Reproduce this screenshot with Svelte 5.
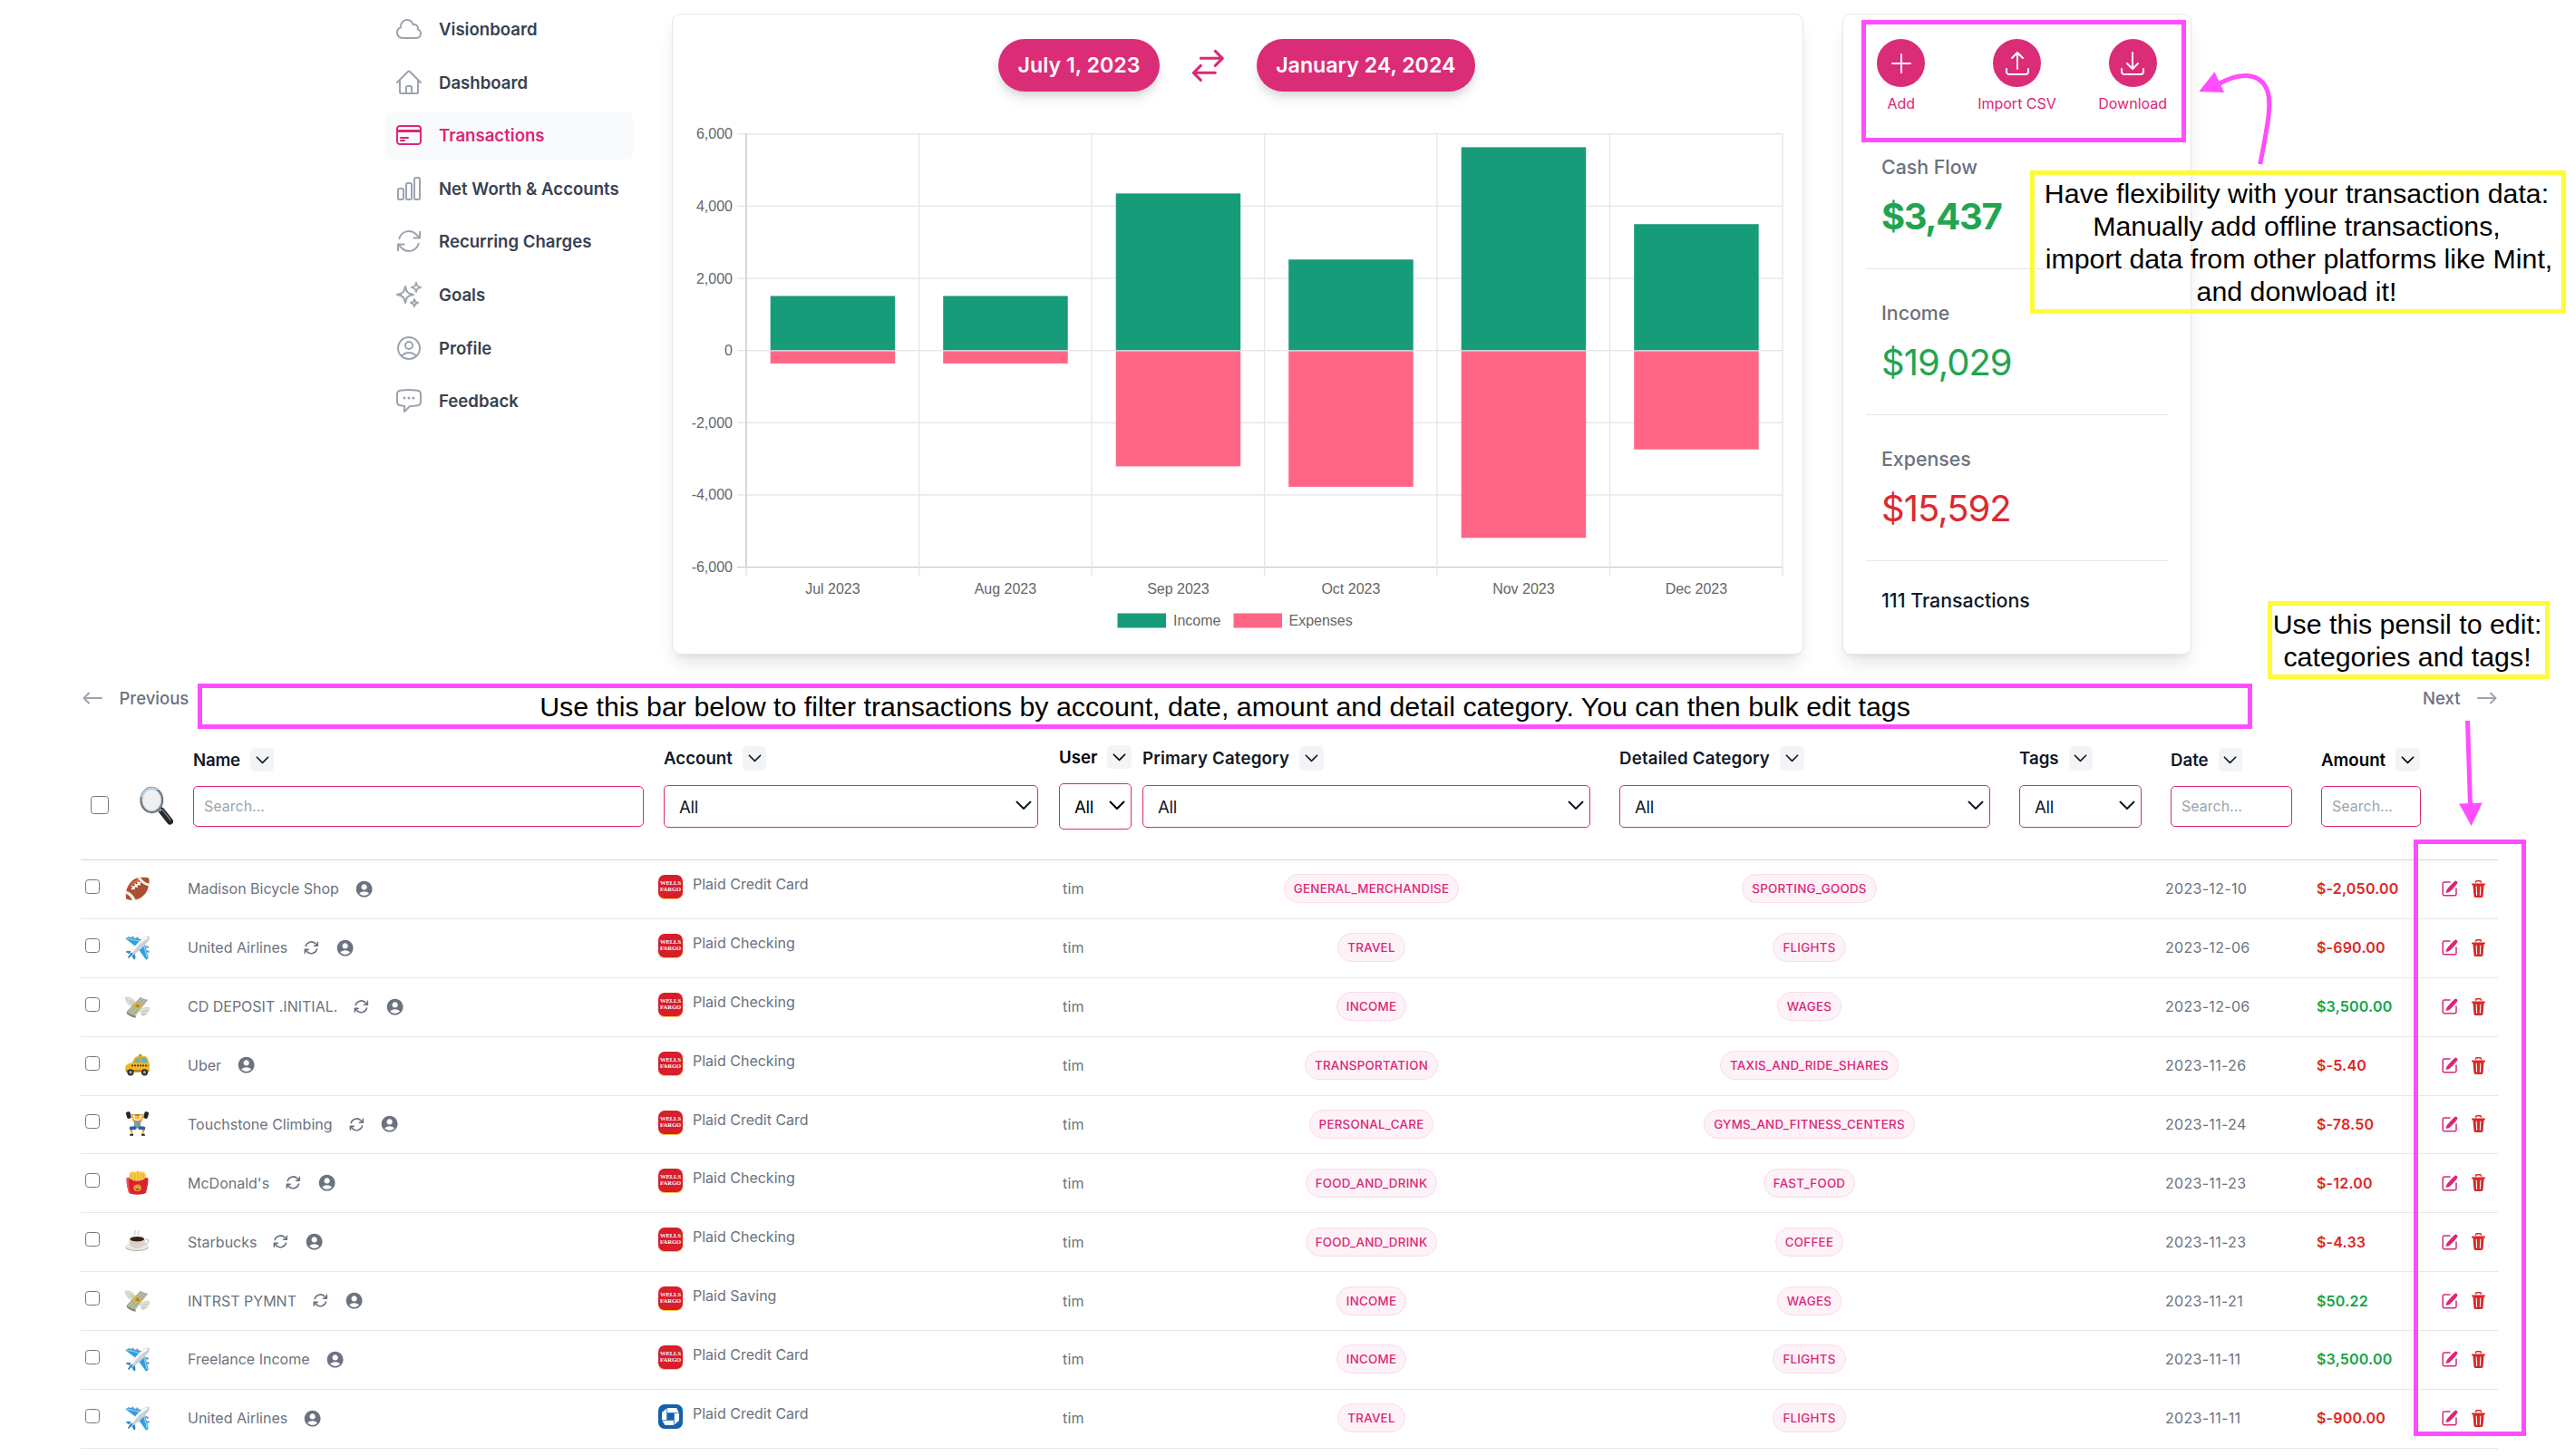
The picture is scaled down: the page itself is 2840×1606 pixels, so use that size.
<script lang="ts">
  type Icon = string[];

  const icons: Record<string, Icon> = {
    cloud: ['M2.25 15a4.5 4.5 0 0 0 4.5 4.5H18a3.75 3.75 0 0 0 1.332-7.257 3 3 0 0 0-3.758-3.848 5.25 5.25 0 0 0-10.233 2.33A4.502 4.502 0 0 0 2.25 15Z'],
    home: ['m2.25 12 8.954-8.955c.44-.439 1.152-.439 1.591 0L21.75 12M4.5 9.75v10.125c0 .621.504 1.125 1.125 1.125H9.75v-4.875c0-.621.504-1.125 1.125-1.125h2.25c.621 0 1.125.504 1.125 1.125V21h4.125c.621 0 1.125-.504 1.125-1.125V9.75M8.25 21h8.25'],
    card: ['M2.25 8.25h19.5M2.25 9h19.5m-16.5 5.25h6m-6 2.25h3m-3.75 3h15a2.25 2.25 0 0 0 2.25-2.25V6.75A2.25 2.25 0 0 0 19.5 4.5h-15a2.25 2.25 0 0 0-2.25 2.25v10.5A2.25 2.25 0 0 0 4.5 19.5Z'],
    bars: ['M3 13.125C3 12.504 3.504 12 4.125 12h2.25c.621 0 1.125.504 1.125 1.125v6.75C7.5 20.496 6.996 21 6.375 21h-2.25A1.125 1.125 0 0 1 3 19.875v-6.75ZM9.75 8.625c0-.621.504-1.125 1.125-1.125h2.25c.621 0 1.125.504 1.125 1.125v11.25c0 .621-.504 1.125-1.125 1.125h-2.25a1.125 1.125 0 0 1-1.125-1.125V8.625ZM16.5 4.125c0-.621.504-1.125 1.125-1.125h2.25C20.496 3 21 3.504 21 4.125v15.75c0 .621-.504 1.125-1.125 1.125h-2.25a1.125 1.125 0 0 1-1.125-1.125V4.125Z'],
    refresh: ['M16.023 9.348h4.992v-.001M2.985 19.644v-4.992m0 0h4.992m-4.993 0 3.181 3.183a8.25 8.25 0 0 0 13.803-3.7M4.031 9.865a8.25 8.25 0 0 1 13.803-3.7l3.181 3.182m0-4.991v4.99'],
    sparkles: ['M9.813 15.904 9 18.75l-.813-2.846a4.5 4.5 0 0 0-3.09-3.09L2.25 12l2.846-.813a4.5 4.5 0 0 0 3.09-3.09L9 5.25l.813 2.846a4.5 4.5 0 0 0 3.09 3.09L15.75 12l-2.846.813a4.5 4.5 0 0 0-3.09 3.09ZM18.259 8.715 18 9.75l-.259-1.035a3.375 3.375 0 0 0-2.455-2.456L14.25 6l1.036-.259a3.375 3.375 0 0 0 2.455-2.456L18 2.25l.259 1.035a3.375 3.375 0 0 0 2.456 2.456L21.75 6l-1.035.259a3.375 3.375 0 0 0-2.456 2.456ZM16.894 20.567 16.5 21.75l-.394-1.183a2.25 2.25 0 0 0-1.423-1.423L13.5 18.75l1.183-.394a2.25 2.25 0 0 0 1.423-1.423l.394-1.183.394 1.183a2.25 2.25 0 0 0 1.423 1.423l1.183.394-1.183.394a2.25 2.25 0 0 0-1.423 1.423Z'],
    user: ['M17.982 18.725A7.488 7.488 0 0 0 12 15.75a7.488 7.488 0 0 0-5.982 2.975m11.963 0a9 9 0 1 0-11.963 0m11.963 0A8.966 8.966 0 0 1 12 21a8.966 8.966 0 0 1-5.982-2.275M15 9.75a3 3 0 1 1-6 0 3 3 0 0 1 6 0Z'],
    chat: ['M8.625 9.75a.375.375 0 1 1-.75 0 .375.375 0 0 1 .75 0Zm0 0H8.25m4.125 0a.375.375 0 1 1-.75 0 .375.375 0 0 1 .75 0Zm0 0H12m4.125 0a.375.375 0 1 1-.75 0 .375.375 0 0 1 .75 0Zm0 0h-.375m-13.5 3.01c0 1.6 1.123 2.994 2.707 3.227 1.087.16 2.185.283 3.293.369V21l4.184-4.183a1.14 1.14 0 0 1 .778-.332 48.294 48.294 0 0 0 5.83-.498c1.585-.233 2.708-1.626 2.708-3.228V6.741c0-1.602-1.123-2.995-2.707-3.228A48.394 48.394 0 0 0 12 3c-2.392 0-4.744.175-7.043.513C3.373 3.746 2.25 5.14 2.25 6.741v6.018Z'],
    swap: ['M7.5 21 3 16.5m0 0L7.5 12M3 16.5h13.5m0-13.5L21 7.5m0 0L16.5 12M21 7.5H7.5'],
    plus: ['M12 4.5v15m7.5-7.5h-15'],
    upload: ['M3 16.5v2.25A2.25 2.25 0 0 0 5.25 21h13.5A2.25 2.25 0 0 0 21 18.75V16.5m-13.5-9L12 3m0 0 4.5 4.5M12 3v13.5'],
    download: ['M3 16.5v2.25A2.25 2.25 0 0 0 5.25 21h13.5A2.25 2.25 0 0 0 21 18.75V16.5M16.5 12 12 16.5m0 0L7.5 12m4.5 4.5V3']
  };

  const nav = [
    { label: 'Visionboard', icon: 'cloud' },
    { label: 'Dashboard', icon: 'home' },
    { label: 'Transactions', icon: 'card', active: true },
    { label: 'Net Worth & Accounts', icon: 'bars' },
    { label: 'Recurring Charges', icon: 'refresh' },
    { label: 'Goals', icon: 'sparkles' },
    { label: 'Profile', icon: 'user' },
    { label: 'Feedback', icon: 'chat' }
  ];

  const actions = [
    { label: 'Add', icon: 'plus' },
    { label: 'Import CSV', icon: 'upload' },
    { label: 'Download', icon: 'download' }
  ];

  const stats = [
    { label: 'Cash Flow', value: '$3,437', tone: 'green strong' },
    { label: 'Income', value: '$19,029', tone: 'green' },
    { label: 'Expenses', value: '$15,592', tone: 'red' }
  ];

  // Chart geometry, in the chart's own pixels.
  const axisX = 81;
  const step = 190.5;
  const zeroY = 254.6;
  const perUnit = 0.03982;
  const ticks = [6000, 4000, 2000, 0, -2000, -4000, -6000];
  const months = [
    { label: 'Jul 2023', income: 1510, expenses: 350 },
    { label: 'Aug 2023', income: 1510, expenses: 350 },
    { label: 'Sep 2023', income: 4350, expenses: 3200 },
    { label: 'Oct 2023', income: 2520, expenses: 3765 },
    { label: 'Nov 2023', income: 5630, expenses: 5180 },
    { label: 'Dec 2023', income: 3500, expenses: 2730 }
  ];
  const y = (v: number) => zeroY - v * perUnit;

  const columns = [
    { key: 'name', label: 'Name', kind: 'search' },
    { key: 'account', label: 'Account', kind: 'select' },
    { key: 'who', label: 'User', kind: 'select' },
    { key: 'primary', label: 'Primary Category', kind: 'select' },
    { key: 'detail', label: 'Detailed Category', kind: 'select' },
    { key: 'tags', label: 'Tags', kind: 'select' },
    { key: 'date', label: 'Date', kind: 'search' },
    { key: 'amount', label: 'Amount', kind: 'search' }
  ];

  const rows = [
    { art: 'football', name: 'Madison Bicycle Shop', rec: false, bank: 'wf', account: 'Plaid Credit Card', primary: 'GENERAL_MERCHANDISE', detail: 'SPORTING_GOODS', date: '2023-12-10', amount: '$-2,050.00' },
    { art: 'plane', name: 'United Airlines', rec: true, bank: 'wf', account: 'Plaid Checking', primary: 'TRAVEL', detail: 'FLIGHTS', date: '2023-12-06', amount: '$-690.00' },
    { art: 'money', name: 'CD DEPOSIT .INITIAL.', rec: true, bank: 'wf', account: 'Plaid Checking', primary: 'INCOME', detail: 'WAGES', date: '2023-12-06', amount: '$3,500.00' },
    { art: 'taxi', name: 'Uber', rec: false, bank: 'wf', account: 'Plaid Checking', primary: 'TRANSPORTATION', detail: 'TAXIS_AND_RIDE_SHARES', date: '2023-11-26', amount: '$-5.40' },
    { art: 'lifter', name: 'Touchstone Climbing', rec: true, bank: 'wf', account: 'Plaid Credit Card', primary: 'PERSONAL_CARE', detail: 'GYMS_AND_FITNESS_CENTERS', date: '2023-11-24', amount: '$-78.50' },
    { art: 'fries', name: "McDonald's", rec: true, bank: 'wf', account: 'Plaid Checking', primary: 'FOOD_AND_DRINK', detail: 'FAST_FOOD', date: '2023-11-23', amount: '$-12.00' },
    { art: 'coffee', name: 'Starbucks', rec: true, bank: 'wf', account: 'Plaid Checking', primary: 'FOOD_AND_DRINK', detail: 'COFFEE', date: '2023-11-23', amount: '$-4.33' },
    { art: 'money', name: 'INTRST PYMNT', rec: true, bank: 'wf', account: 'Plaid Saving', primary: 'INCOME', detail: 'WAGES', date: '2023-11-21', amount: '$50.22' },
    { art: 'plane', name: 'Freelance Income', rec: false, bank: 'wf', account: 'Plaid Credit Card', primary: 'INCOME', detail: 'FLIGHTS', date: '2023-11-11', amount: '$3,500.00' },
    { art: 'plane', name: 'United Airlines', rec: false, bank: 'chase', account: 'Plaid Credit Card', primary: 'TRAVEL', detail: 'FLIGHTS', date: '2023-11-11', amount: '$-900.00' }
  ];
</script>

{#snippet line(name: string, cls: string, width = 1.5)}
  <svg class={cls} viewBox="0 0 24 24" fill="none" stroke="currentColor" stroke-width={width} stroke-linecap="round" stroke-linejoin="round">
    {#each icons[name] as d}<path {d} />{/each}
  </svg>
{/snippet}

{#snippet chevron(cls: string)}
  <svg class={cls} viewBox="0 0 18 11" fill="none" stroke="currentColor" stroke-width="2" stroke-linecap="round" stroke-linejoin="round"><path d="M1.5 1.5 9 9l7.5-7.5" /></svg>
{/snippet}

{#snippet art(name: string)}
  <svg class="art" viewBox="0 0 27 27">
    {#if name === 'football'}
      <path d="M1.2 24.6C-1 13.500 6 1.200 17.500.8c5-.2 8 .3 8.700 1.200.8 2 .6 10-3.500 16C18 25 8 28 1.200 24.600Z" fill="#a9502f" />
      <path d="M3 13C7 5 14 2 20 2c-5 2-12 6-17 11Z" fill="#c9704a" />
      <path d="M.9 15.500C6 17 10 21 11.800 26.100l-4 .2C6.500 22.500 4 20 .6 18.800ZM17 .8c2 3.500 5.500 6 9.700 7l-.4 2.800C21 9.500 16.500 6 13.800 1.500Z" fill="#f5efe6" />
      <path d="m7.500 13.500 9-7M8 10.500l2.200 3M11 8.200l2.200 3M14 6l2.200 3" stroke="#fff" stroke-width="1.600" stroke-linecap="round" />
    {:else if name === 'plane'}
      <path d="M.3 3.200 3.500 1.200 20 4.500l-7 8.500ZM25.800 24.800l-2.600 2-9.700-13.300 7.500-7.500Z" fill="#2f9fe0" />
      <path d="M1.500 2.800 17 6.500M24.300 24.500 20.500 9.500" stroke="#8fd6f7" stroke-width="1.200" fill="none" />
      <path d="m.5 18 2-1.300 8 .8-3 4ZM10 26.700l1.500-1.700-1-7-4 3Z" fill="#2689cc" />
      <path d="M4.800 20.200C8.500 13.500 16 4.500 22.300 1.300c2.200-1 4.700-1 4.700.5 0 2-.8 3.500-2.200 5.300C19.800 13 12.500 19.700 7 22.700c-1.800.9-3-.8-2.200-2.500Z" fill="#ccd1d7" />
      <path d="M7 18.500C12 11.500 17 6 23.500 2.500" stroke="#fff" stroke-width="2.200" fill="none" stroke-linecap="round" />
      <path d="m3.500 24.500 4.500-5.500" stroke="#1c75b8" stroke-width="1.500" />
      <path d="m8 .8 1.500 2.800M13 1.700l1.300 2.800M25.700 13l-3-1.200M26.500 18l-3-1" stroke="#7894a8" stroke-width="1.900" />
    {:else if name === 'money'}
      <path d="M.2 3.200c4-.5 8 1 10.500 4.500l-3 5C5 12.800 1 9 .2 3.200ZM17 18c2-3 5-4 9.700-3.200-.5 5-3.700 8.200-8 8.400Z" fill="#e3e5da" stroke="#b7bba9" stroke-width=".7" />
      <path d="M2 5.500 9 8M4 9l5 .5M19 19l6-2M19 21.500l4-.6" stroke="#a7aa9a" stroke-width=".7" />
      <path d="m1.800 18.600 15-15.800c3 1.500 6 2.500 8.700 3L11.500 23.500C8 23 4.500 21.500 1.800 18.600Z" fill="#b8bea2" />
      <path d="m2.500 19 15-15.500M5 20.800 20 5M8.500 22.300 23 6" stroke="#8b9575" stroke-width=".8" />
      <path d="m1.800 18.600.2 2.700c3 2.800 6.500 4 9.800 4.500l-.3-2.300C8 23 4.500 21.500 1.800 18.600Z" fill="#7e8468" />
      <path d="m8.500 11.600 3.200-3.500c2 2 4.500 3.500 7.200 4.600l-3.200 4.100c-2.800-1-5.200-2.900-7.200-5.200Z" fill="#e3b13d" />
      <path d="m11.500 12.500 4 1.500M12.500 11l3.200 1.300" stroke="#8f6414" stroke-width="1" />
    {:else if name === 'taxi'}
      <path d="M15 1h3.500v3H15Z" fill="#d98a1b" />
      <path d="M7.500 11C9 6.500 10.500 4 13.500 3.300c3-.7 7.500-.5 9.500.2C25.500 5 26 9 26.600 12l-.6 7H2Z" fill="#f3a81c" />
      <path d="M10 10.500c1-3 2.500-5.300 4.500-5.600l2-.2v6ZM18 4.700c2-.1 3.700 0 4.400.6 1.200 1 1.700 3 2 5.300H18Z" fill="#58b7c7" />
      <path d="M.5 14c1.200-2.300 4-3.500 7.500-3.700l18.500.2c.7 3 .6 8-.4 9.500L2 21C.2 19.500-.2 16 .5 14Z" fill="#f8b61d" />
      <path d="M7 13.300h18.500" stroke="#463312" stroke-width="1.800" stroke-dasharray="2 1" />
      <path d="M.6 18h25.800v2.500H1.500Z" fill="#c77a18" />
      <circle cx="6" cy="20.800" r="3.600" fill="#2c2d30" /><circle cx="6" cy="20.800" r="1.700" fill="#9ba1a8" />
      <circle cx="21.500" cy="20.800" r="3.600" fill="#2c2d30" /><circle cx="21.500" cy="20.800" r="1.700" fill="#9ba1a8" />
    {:else if name === 'lifter'}
      <path d="M3 3.500h21" stroke="#9a9a9a" stroke-width="1.200" />
      <path d="M.7 1.800C2 .3 4 0 5.300.6l1.500 6C5.500 8 3.500 8.300 2.500 7.500ZM26.300 1.800C25 .3 23 0 21.700.6l-1.500 6c1.300 1.400 3.300 1.700 4.300.9Z" fill="#222428" />
      <path d="m7.300 3.500 2 6.500 4.200 1.500L17.700 10l2-6.500" fill="none" stroke="#f2b233" stroke-width="2.400" stroke-linejoin="round" />
      <circle cx="13.500" cy="6" r="3" fill="#f6bd3b" /><path d="M10.500 5c1-3 5-3 6 0Z" fill="#c98318" />
      <path d="M9.700 10.200h7.600l-.5 8h-6.600Z" fill="#8d95a1" />
      <path d="m10.500 18.300-4.500.5 1.800 6M16.500 18.300l4.500.5-1.800 6" fill="none" stroke="#f2b233" stroke-width="2.200" />
      <path d="m10.800 18.200-4.200.3M16.200 18.200l4.200.3" stroke="#2a65aa" stroke-width="3.800" stroke-linecap="round" />
      <path d="M5.500 24.700H9v2.100H5Zm12.500 0h3.500l.5 2.100h-4Z" fill="#222428" />
    {:else if name === 'fries'}
      <path d="M3.500 11 5 2.500 8 1l3 1 2.500-1.700L17 1.500l3-.2 2.500 2L23.500 11 20 15H7Z" fill="#f8cf4a" />
      <path d="M7 3.500 8 13M10.500 2.500l.5 11M14 2v12M17.500 3 17 13M20.500 3.500 19.500 12" stroke="#db9c22" stroke-width=".8" />
      <path d="M1.500 8.500 4.500 8c3 5 14.500 5 18 0l3 .5c0 6-1.200 12-2.700 16.500-5 2.300-13.500 2.300-18.600 0C2.700 20.500 1.500 14.500 1.500 8.500Z" fill="#d8232f" />
      <path d="M1.500 8.500c0 6 1.200 12 2.700 16.500l2 .8C4 19 3.500 13 4.500 8Z" fill="#f0535a" />
      <ellipse cx="13.500" cy="19.300" rx="4.200" ry="3.700" fill="#efa62e" /><path d="M11.500 20.500c1 1.200 3 1.200 4 0M12 17.800h.1M15 17.800h.1" stroke="#b0501a" stroke-width="1" stroke-linecap="round" />
    {:else if name === 'coffee'}
      <path d="M11 6c-2-2 1.500-2.500 0-5M14.500 6c-1.500-2 1.500-2.800 0-4.500" stroke="#c9cbce" stroke-width="1.200" fill="none" />
      <ellipse cx="13" cy="19.800" rx="12.800" ry="4.300" fill="#bdb5ac" /><ellipse cx="13" cy="18.800" rx="12.600" ry="4" fill="#ece7e1" />
      <path d="M4 10.500c0 7 3.500 10.500 9 10.500s9.500-3.500 9.500-10.500Z" fill="#d9d2cb" />
      <path d="M21.500 11.500c4-1 5 1 3.500 3-1 1.300-3 2.300-4.500 2.500" stroke="#d9d2cb" stroke-width="1.800" fill="none" />
      <ellipse cx="13.200" cy="10.500" rx="9.300" ry="3.700" fill="#f6f3f0" /><ellipse cx="13.200" cy="10.800" rx="7.900" ry="2.800" fill="#3c2118" />
    {/if}
  </svg>
{/snippet}

{#snippet bank(kind: string)}
  {#if kind === 'wf'}
    <span class="bank wells"><span>WELLS</span><span>FARGO</span></span>
  {:else}
    <svg class="bank" viewBox="0 0 27 27">
      <rect width="27" height="27" rx="7" fill="#1560a8" />
      <path d="M9.800 4h10.400v5.500H9.800ZM23 9.500v8.500l-.2.300h-5.300V9.500ZM17.200 23H7.500v-5.500h9.700ZM4 17.500V9.200h5.500v8.300Z" fill="#fff" />
      <path d="m9.800 4-5.800 5v.5h5.800ZM20 4l3 5.500h-3ZM22.800 18l-5.600 5v-5ZM4 17.300 7.500 23h2v-5.500Z" fill="#fff" />
      <path d="M9.600 4v13.500M9.600 9.500H23M17.500 9.500V23M4 17.500h13.500" stroke="#4b86bf" stroke-width="1" />
    </svg>
  {/if}
{/snippet}

<div class="page">
  <section class="top">
    <nav>
      {#each nav as item}
        <a class="nav-item" class:active={item.active}>
          {@render line(item.icon, 'nav-icon')}
          <span>{item.label}</span>
        </a>
      {/each}
    </nav>

    <div class="panel chart-panel">
      <div class="range">
        <span class="pill">July 1, 2023</span>
        {@render line('swap', 'swap', 1.7)}
        <span class="pill">January 24, 2024</span>
      </div>
      <svg class="chart" viewBox="0 0 1246 580">
        {#each ticks as t}
          <rect x={axisX - 10} y={y(t) - 0.6} width={10 + step * 6} height="1.300" class={t === -6000 ? 'axis' : 'grid'} />
          <text class="tick" x="66" y={y(t) + 5.600} text-anchor="end">{t.toLocaleString('en-US')}</text>
        {/each}
        {#each [0, 1, 2, 3, 4, 5, 6] as i}
          <rect x={axisX + i * step - 0.6} y={y(6000)} width="1.300" height="488" class="grid" />
        {/each}
        <rect x={axisX - 0.6} y={y(6000)} width="1.300" height="478" class="axis" />
        {#each months as m, i}
          {@const x = axisX + i * step + 26.7}
          <rect {x} y={y(m.income)} width="137.500" height={m.income * perUnit - 0.4} class="income" />
          <rect {x} y={zeroY + 0.8} width="137.500" height={m.expenses * perUnit - 0.4} class="expense" />
          <text class="tick" x={x + 68.7} y="523.200" text-anchor="middle">{m.label}</text>
        {/each}
        <rect x="490.500" y="544.500" width="53.500" height="16" class="income" />
        <text class="tick" x="552" y="558.300">Income</text>
        <rect x="618.500" y="544.500" width="53.500" height="16" class="expense" />
        <text class="tick" x="679.500" y="558.300">Expenses</text>
      </svg>
    </div>

    <div class="panel summary">
      <div class="actions">
        {#each actions as a}
          <div class="action">
            <span class="circle">{@render line(a.icon, 'action-icon')}</span>
            <span>{a.label}</span>
          </div>
        {/each}
      </div>
      {#each stats as s}
        <div class="stat">
          <span class="stat-label">{s.label}</span>
          <span class="stat-value {s.tone}">{s.value}</span>
        </div>
      {/each}
      <div class="count">111 Transactions</div>
    </div>
  </section>

  <div class="pager">
    <div class="page-link">
      <svg class="arrow" viewBox="0 0 22 16" fill="none" stroke="#9ca3af" stroke-width="2" stroke-linecap="round" stroke-linejoin="round"><path d="M7 2.500 1.500 8 7 13.500M1.500 8H21" /></svg>
      <span>Previous</span>
    </div>
    <div class="page-link">
      <span>Next</span>
      <svg class="arrow" viewBox="0 0 22 16" fill="none" stroke="#9ca3af" stroke-width="2" stroke-linecap="round" stroke-linejoin="round"><path d="M15 2.500 20.500 8 15 13.500M20.500 8H1" /></svg>
    </div>
  </div>

  <section class="table">
    <div class="grid-row head">
      <div class="head-check"><span class="check large"></span></div>
      <div class="head-glass">
        <svg class="glass" viewBox="0 0 37 43">
          <path d="m24 27 9.500 12" stroke="#25282b" stroke-width="7" stroke-linecap="round" />
          <path d="m25 26 9 11.500" stroke="#777c80" stroke-width="1.300" stroke-linecap="round" />
          <path d="m20 23.500 3.500 4" stroke="#a4a9ad" stroke-width="3" />
          <ellipse cx="13.300" cy="15.500" rx="11.800" ry="13.500" fill="#eff0f1" stroke="#6e7881" stroke-width="2.400" />
          <path d="M2.100 12.500A12 12.500 0 0 1 20 4" stroke="#b2d3ef" stroke-width="2" fill="none" />
          <ellipse cx="13.300" cy="15.500" rx="10.300" ry="12" fill="none" stroke="#c9ccd0" stroke-width="1" />
        </svg>
      </div>
      {#each columns as c}
        <div class="head-cell {c.key}">
          <div class="title"><span>{c.label}</span><span class="sort">{@render chevron('sort-icon')}</span></div>
          {#if c.kind === 'search'}
            <div class="field search">Search...</div>
          {:else}
            <div class="field select"><span class="all">All</span>{@render chevron('select-icon')}</div>
          {/if}
        </div>
      {/each}
    </div>

    {#each rows as r}
      <div class="grid-row row">
        <div class="cell c-check"><span class="check"></span></div>
        <div class="cell c-art">{@render art(r.art)}</div>
        <div class="cell c-name">
          <span>{r.name}</span>
          {#if r.rec}{@render line('refresh', 'recur', 2)}{/if}
          <svg class="person" viewBox="0 0 24 24" fill="currentColor"><path d="M12 2C6.480 2 2 6.480 2 12s4.480 10 10 10 10-4.480 10-10S17.520 2 12 2zm0 4c1.930 0 3.500 1.570 3.500 3.500S13.930 13 12 13s-3.500-1.570-3.500-3.500S10.070 6 12 6zm0 14c-2.030 0-4.430-.820-6.140-2.880a9.947 9.947 0 0 1 12.280 0C16.430 19.180 14.030 20 12 20z" /></svg>
        </div>
        <div class="cell c-account">{@render bank(r.bank)}<span>{r.account}</span></div>
        <div class="cell c-user">tim</div>
        <div class="cell c-badge"><span class="badge">{r.primary}</span></div>
        <div class="cell c-badge"><span class="badge">{r.detail}</span></div>
        <div class="cell"></div>
        <div class="cell c-date">{r.date}</div>
        <div class="cell c-amount" class:neg={r.amount.includes('-')}>{r.amount}</div>
        <div class="cell c-tools">
          <svg class="edit" viewBox="0 0 18 18" fill="none" stroke="#db2777"><path d="M9.500 2H3A1.700 1.700 0 0 0 1.200 3.700V15A1.700 1.700 0 0 0 3 16.800h11.300A1.700 1.700 0 0 0 16 15V8.500" stroke-width="1.500" /><path d="M14.700.7c1-1 3.500.9 2.600 2.500-2.300 3.400-5 6.500-8.300 9.200-1.200.8-2.800 1.200-4.400 1.300.2-1.500.7-3 1.600-4.100 2.600-3.400 5.400-6.300 8.500-8.900Z" fill="#db2777" stroke="none" /></svg>
          <svg class="trash" viewBox="0 0 15 19"><path d="M4.600 2.800V1.700A1 1 0 0 1 5.600.7h3.800a1 1 0 0 1 1 1v1.100" fill="none" stroke="#dc2626" stroke-width="1.400" /><path d="M.9 3.400h13.200a.8.8 0 0 1 0 1.900h-.5l-1.100 12c-.1.900-.7 1.600-1.600 1.600H4.100c-.9 0-1.500-.7-1.600-1.600l-1.100-12H.9a.8.8 0 0 1 0-1.900Z" fill="#dc2626" /><path d="m5.200 7 .4 9.300M9.800 7l-.4 9.300" stroke="#fff" stroke-width="1.100" stroke-linecap="round" /></svg>
        </div>
      </div>
    {/each}
  </section>

  <!-- Tutorial callouts laid over the page -->
  <div class="note magenta note-actions"></div>
  <div class="note yellow note-flex">
    <span>Have flexibility with your transaction data:</span>
    <span>Manually add offline transactions,</span>
    <span class="nudge">import data from other platforms like Mint,</span>
    <span>and donwload it!</span>
  </div>
  <div class="note yellow note-edit"><span>Use this pensil to edit:</span><span>categories and tags!</span></div>
  <div class="note magenta note-filter"><span>Use this bar below to filter transactions by account, date, amount and detail category. You can then bulk edit tags</span></div>
  <div class="note magenta note-tools"></div>
  <svg class="pointer curve" viewBox="0 0 90 110"><path d="M72.800 106C79 72 88 36 79 21 70 5 50 5 28 17" fill="none" stroke="#ff4dff" stroke-width="5" /><path d="M5.300 26 22.500 4.300 33 27Z" fill="#ff4dff" /></svg>
  <svg class="pointer straight" viewBox="0 0 30 120"><path d="m11.500 0 3 93" stroke="#ff4dff" stroke-width="5" /><path d="m2.200 91.500 25.500-1L15.700 116Z" fill="#ff4dff" /></svg>
</div>

<style>
  :global(body) { background: #fff; }
  * { box-sizing: border-box; }
  svg { display: block; flex: none; }
  .page {
    position: relative;
    width: 2840px;
    height: 1606px;
    overflow: hidden;
    font-family: Inter, 'Liberation Sans', sans-serif;
    color: #111827;
  }
  .top { display: flex; align-items: flex-start; height: 754px; padding-left: 425px; }

  nav { display: flex; flex-direction: column; gap: 5.330px; width: 273px; margin: 5.200px 42.500px 0 0; }
  .nav-item { display: flex; align-items: center; gap: 17px; height: 53.330px; padding-left: 10px; border-radius: 8px; font-size: 18.600px; font-weight: 600; color: #374151; white-space: nowrap; }
  .nav-item :global(.nav-icon) { width: 32px; height: 32px; color: #9ca3af; }
  .nav-item.active { background: #f9fafb; color: #db2777; }
  .nav-item.active :global(.nav-icon) { color: #db2777; }

  .panel { height: 707px; margin-top: 15px; border: 1px solid #e8e8ea; border-radius: 9px; background: #fff; box-shadow: 0 13px 20px -4px rgb(0 0 0 / 0.1), 0 5px 8px -5px rgb(0 0 0 / 0.1); }
  .chart-panel { width: 1248px; margin-right: 43.500px; display: flex; flex-direction: column; }
  .range { display: flex; justify-content: center; align-items: center; gap: 32px; height: 116px; padding: 0 1px 4px 0; }
  .pill { display: flex; align-items: center; height: 58.700px; padding: 0 21.500px; border-radius: 30px; background: #db2c77; color: #fff; font-size: 23.200px; font-weight: 600; box-shadow: 0 5px 8px -1px rgb(0 0 0 / 0.1), 0 10px 16px -2px rgb(0 0 0 / 0.08); white-space: nowrap; }
  .range :global(.swap) { width: 42.670px; height: 42.670px; color: #db2777; }
  .chart { width: 1246px; height: 580px; }
  .grid { fill: #e5e5e5; }
  .axis { fill: #cacaca; }
  .income { fill: #179c7a; }
  .expense { fill: #ff6685; }
  .tick { font: 16px 'Liberation Sans', Arial, sans-serif; fill: #666; }

  .summary { width: 385px; padding: 27px 25px 0; display: flex; flex-direction: column; }
  .actions { display: flex; justify-content: space-between; height: 119px; margin: 0 -25px; }
  .action { display: flex; flex-direction: column; align-items: center; gap: 8px; width: 128.330px; font-size: 16px; line-height: 20px; color: #db2777; }
  .circle { display: grid; place-items: center; width: 53.300px; height: 53.300px; border-radius: 50%; background: #db2c77; color: #fff; }
  .circle :global(.action-icon) { width: 32px; height: 32px; }
  .stat { display: flex; flex-direction: column; height: 161px; padding: 35px 17px 0; border-bottom: 1.300px solid #e5e7eb; }
  .stat:nth-child(2) { height: 135px; padding-top: 9px; }
  .stat-label { font-size: 21.330px; font-weight: 500; line-height: 26px; color: #6b7280; }
  .stat-value { margin-top: 18px; font-size: 40px; line-height: 48px; letter-spacing: -0.025em; }
  .stat-value.strong { font-weight: 700; letter-spacing: -0.035em; }
  .green { color: #22a450; }
  .red { color: #dc2a30; }
  .count { padding: 30px 17px; font-size: 21.330px; line-height: 26px; font-weight: 500; color: #111827; }

  .pager { display: flex; justify-content: space-between; align-items: flex-start; height: 50px; padding: 4px 86px 0 91px; }
  .page-link { display: flex; align-items: center; gap: 18.500px; height: 24px; font-size: 18.500px; font-weight: 500; color: #6b7280; }
  .arrow { width: 22px; height: 16px; }

  .table { margin-left: 89px; width: 2666px; }
  .grid-row { display: grid; grid-template-columns: 43px 71px 517px 442px 92px 517px 449px 163px 167px 130px 75px; }
  .head { height: 145px; border-bottom: 1.300px solid #d1d5db; }
  .check { display: block; width: 16px; height: 16px; border: 1.500px solid #767676; border-radius: 3.500px; background: #fff; }
  .check.large { width: 20px; height: 20px; }
  .head-check { padding: 74px 0 0 11px; }
  .head-glass { padding: 63px 0 0 22px; }
  .glass { width: 37px; height: 43px; }
  .head-cell { display: flex; flex-direction: column; gap: 16px; padding-top: 19px; }
  .title { display: flex; align-items: center; gap: 11px; height: 27px; font-size: 18.670px; font-weight: 600; white-space: nowrap; }
  .sort { display: grid; place-items: center; width: 26.500px; height: 100%; border-radius: 5px; background: #f3f4f6; }
  .sort :global(.sort-icon) { width: 15px; height: 9px; }
  .field { display: flex; align-items: center; justify-content: space-between; height: 47px; border: 1.300px solid #db2777; border-radius: 5px; background: #fff; }
  .search { height: 45px; padding: 0 0 2px 11px; font-size: 16px; color: #9ca3af; }
  .select { padding: 0 6px 0 16px; font-size: 18.670px; }
  .select .all { margin-top: 2px; letter-spacing: -0.3px; }
  .select :global(.select-icon) { width: 18px; height: 11px; margin-top: -3px; }
  .name, .date, .amount { padding-top: 21px; }
  .name .title, .date .title, .amount .title { height: 26px; }
  .name { padding-left: 10px; } .name .field { width: 497px; }
  .name .title { letter-spacing: -0.2px; }
  .account { padding-left: 12px; } .account .field { width: 413px; }
  .who { padding-left: 6px; padding-top: 18px; color: #000; } .who .field { width: 80px; height: 51px; } .who .title { height: 26px; }
  .primary { padding-left: 6px; } .primary .field { width: 494px; }
  .detail { padding-left: 15px; } .detail .field { width: 409px; }
  .primary .title, .detail .title { letter-spacing: 0.2px; }
  .tags { padding-left: 7px; } .tags .field { width: 135px; }
  .date { padding-left: 11px; } .date .field { width: 134px; }
  .amount { padding-left: 10px; color: #000; } .amount .field { width: 110px; }

  .row { height: 64.880px; border-bottom: 1px solid #e5e7eb; font-size: 16px; color: #6b7280; }
  .cell { display: flex; align-items: center; padding-bottom: 1px; white-space: nowrap; }
  .c-check { padding: 0 0 6px 5px; }
  .c-art { padding-left: 6px; }
  .art { width: 27px; height: 27px; }
  .c-name { gap: 17px; padding-left: 4px; }
  .c-name :global(.recur) { width: 18.670px; height: 18.670px; }
  .person { width: 21.330px; height: 21.330px; }
  .c-account { align-items: flex-start; gap: 11px; padding: 16px 0 0 6px; line-height: 21px; }
  .bank { flex: none; width: 27px; height: 27px; }
  .wells { display: flex; flex-direction: column; align-items: center; padding-top: 5px; border-bottom: 1px solid #ffcd41; border-radius: 7px; background: #d71e2b; color: #fff; font: 700 6.500px/7px 'Liberation Serif', serif; }
  .c-user { padding-left: 10px; letter-spacing: 0.2px; }
  .c-badge { justify-content: center; }
  .badge { display: flex; align-items: center; height: 32px; padding: 0 10px; border: 1.300px solid #fadcea; border-radius: 16px; background: #fdf2f8; color: #db2777; font-size: 13.330px; font-weight: 500; letter-spacing: 0.27px; }
  .c-date { padding-left: 5px; letter-spacing: 0.3px; }
  .c-amount { padding-left: 5px; font-weight: 600; letter-spacing: 0.2px; color: #16a34a; }
  .c-amount.neg { color: #dc2626; }
  .c-tools { gap: 15px; padding-left: 13px; }
  .edit { width: 18px; height: 18px; }
  .trash { width: 15px; height: 19px; }

  .note { position: absolute; display: flex; flex-direction: column; align-items: center; border: 5px solid; font: 30.330px/36px 'Liberation Sans', Arial, sans-serif; white-space: nowrap; }
  .note span { color: #000; }
  .magenta { border-color: #ff4dff; }
  .yellow { border-color: #fffb38; }
  .note-actions { left: 2053px; top: 22px; width: 358px; height: 135px; }
  .note-flex { left: 2239px; top: 188px; width: 591px; height: 158px; padding: 3px 3px 0 0; }
  .nudge { padding-left: 5px; }
  .note-edit { left: 2501px; top: 663px; width: 311px; height: 86px; padding: 3px 3px 0 0; }
  .note-filter { left: 218px; top: 754px; width: 2266px; height: 50px; padding-top: 3px; background: #fff; }
  .note-tools { left: 2662px; top: 926px; width: 124px; height: 658px; }
  .pointer { position: absolute; }
  .curve { left: 2420px; top: 75px; width: 90px; height: 110px; }
  .straight { left: 2710px; top: 795px; width: 30px; height: 120px; }
</style>
